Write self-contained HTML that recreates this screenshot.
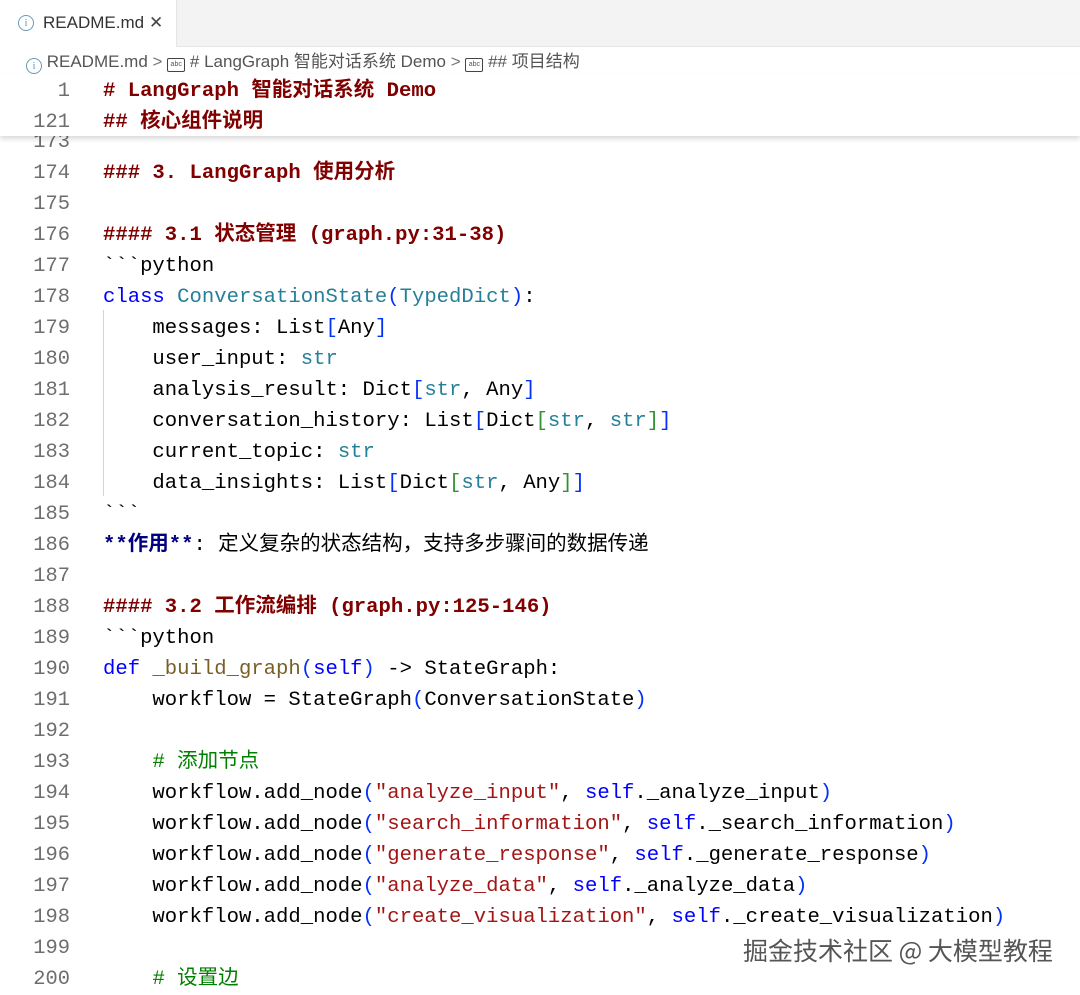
<!DOCTYPE html>
<html><head><meta charset="utf-8"><style>
body{margin:0;width:1080px;height:991px;overflow:hidden;background:#fff;position:relative;font-family:"Liberation Sans","Noto Sans CJK SC",sans-serif}
.tabbar{position:absolute;left:0;top:0;width:1080px;height:46px;background:#f3f3f3;border-bottom:1px solid #e5e5e5}
.tab{position:absolute;left:0;top:0;width:176px;height:47px;background:#fff;border-right:1px solid #e5e5e5;font-size:17px;color:#333;line-height:46px}
.bc{position:absolute;left:26px;top:50px;font-size:17px;color:#555;line-height:24px;white-space:nowrap}
.ic{display:inline-block;width:14px;height:14px;border:1.3px solid #6a9ab8;border-radius:50%;font-size:11px;line-height:14px;text-align:center;color:#6a9ab8;vertical-align:-2px;font-family:"Liberation Serif",serif}
.abc{display:inline-block;width:16px;height:12px;border:1.3px solid #444;border-radius:2px;font-size:7px;line-height:12px;text-align:center;vertical-align:1px}
.ln{position:absolute;left:0;width:70px;text-align:right;color:#6e6e6e;font:20.4px "Liberation Mono","Noto Sans CJK SC",monospace;line-height:31px}
.cd{position:absolute;left:103px;white-space:pre;font:20.6px "Liberation Mono","Noto Sans CJK SC",monospace;line-height:31px;color:#000}
.c{font-size:20.5px;font-family:"Noto Sans CJK SC",sans-serif;line-height:1}
.h{color:#800000;font-weight:bold}
.k{color:#0000ff}.t{color:#267f99}.b{color:#0431fa}.g{color:#319331}.s{color:#a31515}.f{color:#795e26}.cm{color:#008000}.em{color:#000080;font-weight:bold}
.sticky{position:absolute;left:0;top:74px;width:1080px;height:62px;background:#fff;box-shadow:0 3px 5px rgba(0,0,0,.15);z-index:2}
.guide{position:absolute;left:103px;top:310px;width:1px;height:186px;background:#d3d3d3}
.wm{position:absolute;left:743px;top:932px;font-size:25px;color:#555;font-family:"Noto Sans CJK SC",sans-serif;text-shadow:0 0 2px #fff,1px 1px 1px #fff;z-index:3}
</style></head><body>
<div class="tabbar"><div class="tab"><span style="position:absolute;left:18px;top:15px" class="ic">i</span><span style="position:absolute;left:43px">README.md</span><span style="position:absolute;left:149px;color:#444">✕</span></div></div>
<div class="bc"><span class="ic">i</span> README.md <span style="color:#777">&gt;</span> <span class="abc">abc</span> # LangGraph 智能对话系统 Demo <span style="color:#777">&gt;</span> <span class="abc">abc</span> ## 项目结构</div>
<div class="sticky">
<div class="ln" style="top:2px">1</div><div class="cd h" style="top:2px"># LangGraph <span class="c">智能对话系统</span> Demo</div>
<div class="ln" style="top:33px">121</div><div class="cd h" style="top:33px">## <span class="c">核心组件说明</span></div>
</div>
<div class="ln" style="top:127px">173</div>
<div class="guide"></div>
<div class="ln" style="top:158px">174<br>175<br>176<br>177<br>178<br>179<br>180<br>181<br>182<br>183<br>184<br>185<br>186<br>187<br>188<br>189<br>190<br>191<br>192<br>193<br>194<br>195<br>196<br>197<br>198<br>199<br>200</div>
<div class="cd" style="top:158px"><span class="h">### 3. LangGraph <span class="c">使用分析</span></span>

<span class="h">#### 3.1 <span class="c">状态管理</span> (graph.py:31-38)</span>
&#96;&#96;&#96;python
<span class="k">class</span> <span class="t">ConversationState</span><span class="b">(</span><span class="t">TypedDict</span><span class="b">)</span>:
    messages: List<span class="b">[</span>Any<span class="b">]</span>
    user_input: <span class="t">str</span>
    analysis_result: Dict<span class="b">[</span><span class="t">str</span>, Any<span class="b">]</span>
    conversation_history: List<span class="b">[</span>Dict<span class="g">[</span><span class="t">str</span>, <span class="t">str</span><span class="g">]</span><span class="b">]</span>
    current_topic: <span class="t">str</span>
    data_insights: List<span class="b">[</span>Dict<span class="g">[</span><span class="t">str</span>, Any<span class="g">]</span><span class="b">]</span>
&#96;&#96;&#96;
<span class="em">**<span class="c">作用</span>**</span>: <span class="c">定义复杂的状态结构，支持多步骤间的数据传递</span>

<span class="h">#### 3.2 <span class="c">工作流编排</span> (graph.py:125-146)</span>
&#96;&#96;&#96;python
<span class="k">def</span> <span class="f">_build_graph</span><span class="b">(</span><span class="k">self</span><span class="b">)</span> -&gt; StateGraph:
    workflow = StateGraph<span class="b">(</span>ConversationState<span class="b">)</span>

    <span class="cm"># <span class="c">添加节点</span></span>
    workflow.add_node<span class="b">(</span><span class="s">"analyze_input"</span>, <span class="k">self</span>._analyze_input<span class="b">)</span>
    workflow.add_node<span class="b">(</span><span class="s">"search_information"</span>, <span class="k">self</span>._search_information<span class="b">)</span>
    workflow.add_node<span class="b">(</span><span class="s">"generate_response"</span>, <span class="k">self</span>._generate_response<span class="b">)</span>
    workflow.add_node<span class="b">(</span><span class="s">"analyze_data"</span>, <span class="k">self</span>._analyze_data<span class="b">)</span>
    workflow.add_node<span class="b">(</span><span class="s">"create_visualization"</span>, <span class="k">self</span>._create_visualization<span class="b">)</span>

    <span class="cm"># <span class="c">设置边</span></span></div>
<div class="wm">掘金技术社区 @ 大模型教程</div>
</body></html>
